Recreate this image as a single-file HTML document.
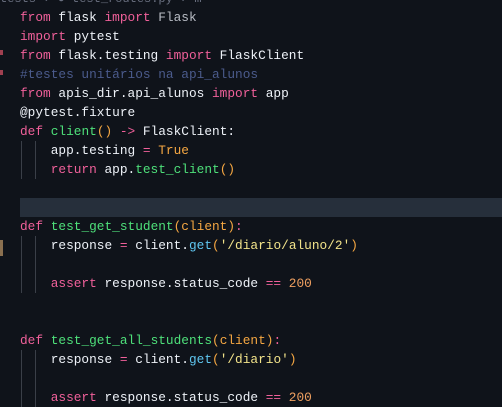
<!DOCTYPE html><html><head><style>
body{margin:0;width:502px;height:407px;background:#0f131a;overflow:hidden;position:relative;font-family:"Liberation Mono",monospace;font-size:12.8px;color:#eef2f8}
.l{position:absolute;left:20px;white-space:pre;line-height:19px;height:19px}
.k{color:#f0609a}.f{color:#4ee07a}.p{color:#f5a742}.c{color:#4b5b8c}.s{color:#f2e38a}.n{color:#f0a060}.b{color:#5fc6f0}.g{color:#8a8f98}
.guide{position:absolute;width:1px;background:#3a3f48}
</style></head><body>
<div style="position:absolute;left:0;top:-8px;white-space:pre;color:#6a7080;font-size:12px">tests › ● test_routes.py › m</div>
<div style="position:absolute;left:20px;right:0;top:198px;height:19px;background:#262f3b"></div>
<div class="guide" style="left:21px;top:141px;height:38px"></div><div class="guide" style="left:35px;top:141px;height:38px"></div>
<div class="guide" style="left:21px;top:236px;height:57px"></div><div class="guide" style="left:35px;top:236px;height:57px"></div>
<div class="guide" style="left:21px;top:350px;height:57px"></div><div class="guide" style="left:35px;top:350px;height:57px"></div>
<div style="position:absolute;left:0;top:50px;width:3px;height:5px;background:#a04050"></div>
<div style="position:absolute;left:0;top:70px;width:3px;height:5px;background:#a04050"></div>
<div style="position:absolute;left:0;top:240px;width:3px;height:16px;background:#8a7050"></div>
<div class="l" style="top:8px"><span class="k">from</span> flask <span class="k">import</span> <span style="color:#b8bcc4">Flask</span></div>
<div class="l" style="top:27px"><span class="k">import</span> pytest</div>
<div class="l" style="top:46px"><span class="k">from</span> flask.testing <span class="k">import</span> FlaskClient</div>
<div class="l" style="top:65px"><span class="c">#testes unitários na api_alunos</span></div>
<div class="l" style="top:84px"><span class="k">from</span> apis_dir.api_alunos <span class="k">import</span> app</div>
<div class="l" style="top:103px">@pytest.fixture</div>
<div class="l" style="top:122px"><span class="k">def</span> <span class="f">client</span><span class="p">()</span> <span class="k">-&gt;</span> FlaskClient:</div>
<div class="l" style="top:141px">    app.testing <span class="k">=</span> <span class="p">True</span></div>
<div class="l" style="top:160px">    <span class="k">return</span> app.<span class="f">test_client</span><span class="p">()</span></div>
<div class="l" style="top:217px"><span class="k">def</span> <span class="f">test_get_student</span><span class="p">(client)</span><span class="k">:</span></div>
<div class="l" style="top:236px">    response <span class="k">=</span> client.<span class="b">get</span><span class="p">(</span><span class="s">'/diario/aluno/2'</span><span class="p">)</span></div>
<div class="l" style="top:274px">    <span class="k">assert</span> response.status_code <span class="k">==</span> <span class="n">200</span></div>
<div class="l" style="top:331px"><span class="k">def</span> <span class="f">test_get_all_students</span><span class="p">(client)</span><span class="k">:</span></div>
<div class="l" style="top:350px">    response <span class="k">=</span> client.<span class="b">get</span><span class="p">(</span><span class="s">'/diario'</span><span class="p">)</span></div>
<div class="l" style="top:388px">    <span class="k">assert</span> response.status_code <span class="k">==</span> <span class="n">200</span></div>
</body></html>
